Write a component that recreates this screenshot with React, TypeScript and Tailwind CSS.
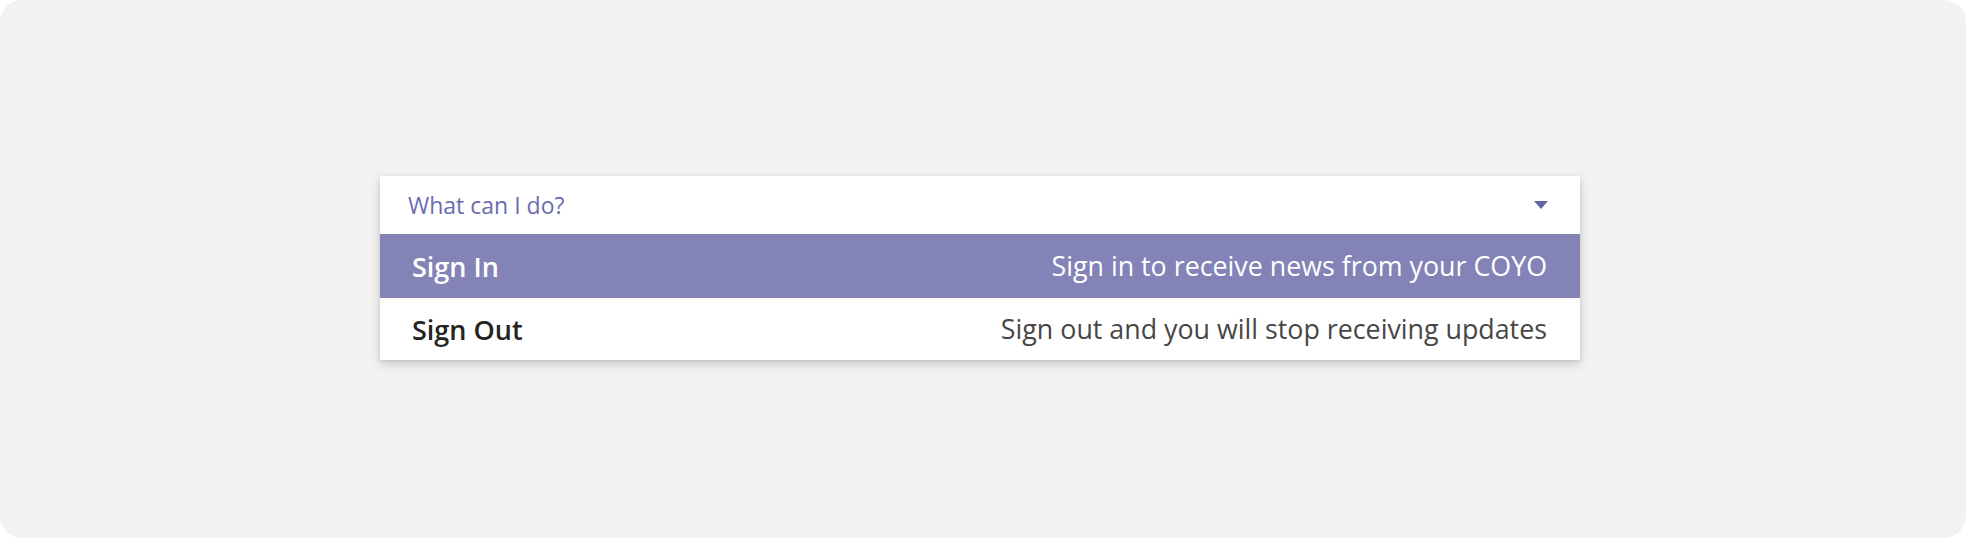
import React from "react";

const rows = [
  { title: "Sign In", desc: "Sign in to receive news from your COYO", active: true },
  { title: "Sign Out", desc: "Sign out and you will stop receiving updates", active: false },
];

export default function App() {
  return (
    <div className="w-[1966px] h-[538px] bg-white">
      <div
        className="w-full h-full rounded-[22px] bg-[#f3f2f1] flex items-center justify-center pr-[6px] pb-[2px]"
        style={{ fontFamily: '"Open Sans", "Noto Sans", sans-serif' }}
      >
        <div className="w-[1200px] bg-white shadow-[0_4px_10px_rgba(0,0,0,0.16),0_1px_3px_rgba(0,0,0,0.1)]">
          <div className="h-[58px] flex items-center justify-between pl-[28px] pr-[32px]">
            <span className="text-[23px] leading-none text-[#6b6cb0]">What can I do?</span>
            <svg width="14" height="8" viewBox="0 0 14 8">
              <path d="M0 0 H14 L7 8 Z" fill="#6264a7" />
            </svg>
          </div>
          {rows.map((r) => (
            <div
              key={r.title}
              className={
                r.active
                  ? "h-[64px] flex items-center justify-between pl-[32px] pr-[33px] bg-[#8383b8] text-white"
                  : "h-[62px] flex items-center justify-between pl-[32px] pr-[33px] bg-white"
              }
            >
              <span className={r.active ? "text-[27px] leading-none font-semibold text-white" : "text-[27px] leading-none font-semibold text-[#252423]"}>
                {r.title}
              </span>
              <span className={r.active ? "text-[26.8px] leading-none text-white" : "text-[26.8px] leading-none text-[#484644]"}>{r.desc}</span>
            </div>
          ))}
        </div>
      </div>
    </div>
  );
}
